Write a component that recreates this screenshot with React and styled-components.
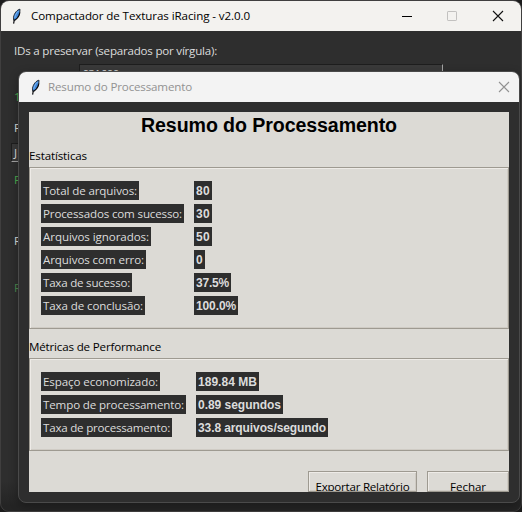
import React, { useLayoutEffect, useRef, useState } from "react";
import styled, { createGlobalStyle } from "styled-components";

const GlobalStyle = createGlobalStyle`
  * { box-sizing: border-box; }
  html, body { margin: 0; background: #1c1c1c; overflow: hidden; }
`;

const ui = `"Open Sans", "Noto Sans", sans-serif`;
const arial = `"Liberation Sans", Arial, sans-serif`;

const Text = styled.span`
  display: block;
  flex: none;
  margin-top: ${(p) => (p.$bold ? 0 : -1)}px;
  white-space: pre;
  font-family: ${(p) => (p.$bold ? arial : ui)};
  font-weight: ${(p) => (p.$bold ? 700 : 400)};
  font-size: ${(p) => p.$size || (p.$bold ? 12 : 11.6)}px;
  line-height: 19px;
  color: ${(p) => p.$color || "#000"};
`;

/* Spreads the letters so that the text takes exactly the given width. */
function FitText({ width, children, ...rest }) {
  const ref = useRef(null);
  const [spacing, setSpacing] = useState(0);
  useLayoutEffect(() => {
    const natural = ref.current.getBoundingClientRect().width;
    setSpacing((width - natural) / children.length);
  }, [width, children]);
  return (
    <Text ref={ref} style={{ letterSpacing: spacing }} {...rest}>
      {children}
    </Text>
  );
}

const Desktop = styled.div`
  position: relative;
  width: 522px;
  height: 512px;
  background: #1c1c1c;
  overflow: hidden;
`;

const MainWindow = styled.div`
  width: 522px;
  height: 512px;
  border: 1px solid #403f3f;
  border-radius: 9px;
  background: #2e2e2e;
  overflow: hidden;
`;

const TitleBar = styled.header`
  display: flex;
  align-items: center;
  height: 30px;
  padding-left: ${(p) => (p.$dialog ? 11 : 10)}px;
  background: ${(p) => (p.$dialog ? "#f3f3f3" : "#f3f2ef")};
`;

const TitleText = styled.div`
  flex: 1;
  display: flex;
  padding-left: ${(p) => (p.$dialog ? 7 : 9)}px;
`;

const WindowControls = styled.div`
  display: flex;
  gap: 35px;
  padding-right: ${(p) => (p.$dialog ? 9 : 17)}px;
`;

const MainBody = styled.main`
  display: flex;
  flex-direction: column;
  align-items: flex-start;
  height: 480px;
  padding: 11px 0 0 13px;
  background: linear-gradient(#2e2e2e 0, #2e2e2e 450px, #242424 475px);
`;

const IdEntry = styled.div`
  display: flex;
  align-items: flex-start;
  width: 364px;
  height: 21px;
  margin: 3px 0 0 65px;
  padding-left: 2px;
  border-top: 1px solid #1e1e1e;
  border-left: 1px solid #1e1e1e;
  border-right: 1px solid #a3a3a3;
  background: #3a3a3a;
`;

const FormLine = styled.div`
  display: flex;
  height: 19px;
  margin-top: ${(p) => p.$gap}px;
`;

const PathEntry = styled.div`
  display: flex;
  width: 364px;
  height: 19px;
  margin: 5px 0 0 -3px;
  padding-left: 2px;
  border: 1px solid #1e1e1e;
  border-bottom-color: #a3a3a3;
  background: #3a3a3a;
`;

const Dialog = styled.section`
  position: absolute;
  left: 18px;
  top: 71px;
  width: 502px;
  height: 432px;
  border: 1px solid #4a4a4a;
  border-radius: 8px;
  background: #2e2e2e;
  overflow: hidden;
  box-shadow: 0 3px 10px rgba(0, 0, 0, 0.3);
`;

const Panel = styled.div`
  display: flex;
  flex-direction: column;
  width: 480px;
  height: 380px;
  margin: 10px 0 0 10px;
  background: #dcdad5;
  overflow: hidden;
`;

const Heading = styled.h1`
  display: flex;
  justify-content: center;
  flex: none;
  height: 35px;
  margin: 0;
  padding-top: 4px;
`;

const SectionLabel = styled.div`
  display: flex;
  flex: none;
  height: 20px;
`;

const Group = styled.div`
  display: grid;
  grid-template-columns: ${(p) => p.$labelColumn}px 1fr;
  grid-auto-rows: 19px;
  row-gap: 4px;
  justify-items: start;
  align-content: start;
  flex: none;
  height: ${(p) => p.$height}px;
  margin-bottom: ${(p) => p.$after}px;
  padding: 13px 10px 0 11px;
  border: 1px solid;
  border-color: #9e9a91;
  box-shadow: inset 1px 1px #eeebe7, inset -1px -1px #cfcbc4;
`;

const Chip = styled.div`
  display: flex;
  width: ${(p) => p.$width}px;
  height: 19px;
  padding: 1px 0 0 2px;
  background: #2e2e2e;
`;

const Actions = styled.footer`
  display: flex;
  justify-content: flex-end;
  gap: 10px;
`;

const Button = styled.button`
  display: flex;
  justify-content: center;
  align-items: flex-start;
  width: ${(p) => p.$width}px;
  height: 21px;
  margin: 0;
  padding: 6px 0 0;
  border: 1px solid #9e9a91;
  box-shadow: inset 1px 1px #eeebe7, inset -1px -1px #cfcbc4;
  background: #dcdad5;
  overflow: hidden;
`;

const Glyph = styled.svg`
  display: block;
  flex: none;
`;

function Feather() {
  return (
    <Glyph width="11" height="17" viewBox="0 0 11 17">
      <path d="M9 1.2C6.4 1.6 3.2 5 2.5 9.2L2.6 12.2L4.6 11.6C7.4 9.4 9.2 5.4 9 1.2Z" fill="#3f88dc" stroke="#20262e" strokeWidth="0.9" />
      <path d="M7.6 3C5.7 4.6 4.2 7 3.8 9.8" fill="none" stroke="#7fb6f0" strokeWidth="1" />
      <path d="M8.8 4.5C8.4 7.8 6.6 10.2 4.4 11.8L3.2 12.4L2.6 15.6" fill="none" stroke="#0c0c10" strokeWidth="1.2" />
    </Glyph>
  );
}

function Cross({ color }) {
  return (
    <Glyph width="12" height="12" viewBox="0 0 12 12">
      <path d="M1 1L11 11M11 1L1 11" stroke={color} strokeWidth="1.1" />
    </Glyph>
  );
}

const statistics = [
  ["Total de arquivos:", 98, "80", 18],
  ["Processados com sucesso:", 143, "30", 18],
  ["Arquivos ignorados:", 110, "50", 18],
  ["Arquivos com erro:", 105, "0", 11],
  ["Taxa de sucesso:", 91, "37.5%", 37],
  ["Taxa de conclusão:", 104, "100.0%", 44],
];

const metrics = [
  ["Espaço economizado:", 119, "189.84 MB", 63],
  ["Tempo de processamento:", 145, "0.89 segundos", 87],
  ["Taxa de processamento:", 131, "33.8 arquivos/segundo", 132],
];

function Rows({ items }) {
  return items.map(([label, labelWidth, value, valueWidth]) => (
    <React.Fragment key={label}>
      <Chip $width={labelWidth}>
        <FitText width={labelWidth - 4} $color="#dcdcdc">{label}</FitText>
      </Chip>
      <Chip $width={valueWidth}>
        <FitText width={valueWidth - 4} $bold $color="#dcdcdc">{value}</FitText>
      </Chip>
    </React.Fragment>
  ));
}

export default function App() {
  return (
    <Desktop>
      <GlobalStyle />
      <MainWindow>
        <TitleBar>
          <Feather />
          <TitleText>
            <FitText width={219}>Compactador de Texturas iRacing - v2.0.0</FitText>
          </TitleText>
          <WindowControls>
            <Glyph width="10" height="12" viewBox="0 0 10 12">
              <path d="M0 6.5H10" stroke="#000" />
            </Glyph>
            <Glyph width="10" height="12" viewBox="0 0 10 12">
              <rect x="0.5" y="1.5" width="9" height="9" rx="0.6" fill="none" stroke="#c2c1bf" />
            </Glyph>
            <Cross color="#111" />
          </WindowControls>
        </TitleBar>
        <MainBody>
          <FormLine $gap={0}>
            <FitText width={203} $color="#dcdcdc">IDs a preservar (separados por vírgula):</FitText>
          </FormLine>
          <IdEntry>
            <FitText width={37} $color="#dcdcdc">631600</FitText>
          </IdEntry>
          <FormLine $gap={3}><Text $color="#4caf50">1</Text></FormLine>
          <FormLine $gap={12}><Text $color="#dcdcdc">P</Text></FormLine>
          <PathEntry><FitText width={7} $color="#dcdcdc">J:</FitText></PathEntry>
          <FormLine $gap={9}><Text $color="#4caf50">P</Text></FormLine>
          <FormLine $gap={42}><Text $color="#dcdcdc">R</Text></FormLine>
          <FormLine $gap={28}><Text $color="#4b8a4e">R</Text></FormLine>
        </MainBody>
      </MainWindow>

      <Dialog>
        <TitleBar $dialog>
          <Feather />
          <TitleText $dialog>
            <FitText width={144} $color="#929292">Resumo do Processamento</FitText>
          </TitleText>
          <WindowControls $dialog>
            <Cross color="#929292" />
          </WindowControls>
        </TitleBar>
        <Panel>
          <Heading>
            <FitText width={256} $bold $size={19.6}>Resumo do Processamento</FitText>
          </Heading>
          <SectionLabel>
            <FitText width={58}>Estatísticas</FitText>
          </SectionLabel>
          <Group $labelColumn={153} $height={162} $after={9}>
            <Rows items={statistics} />
          </Group>
          <SectionLabel>
            <FitText width={132}>Métricas de Performance</FitText>
          </SectionLabel>
          <Group $labelColumn={155} $height={93} $after={20}>
            <Rows items={metrics} />
          </Group>
          <Actions>
            <Button $width={109}><FitText width={94}>Exportar Relatório</FitText></Button>
            <Button $width={82}><FitText width={36}>Fechar</FitText></Button>
          </Actions>
        </Panel>
      </Dialog>
    </Desktop>
  );
}
